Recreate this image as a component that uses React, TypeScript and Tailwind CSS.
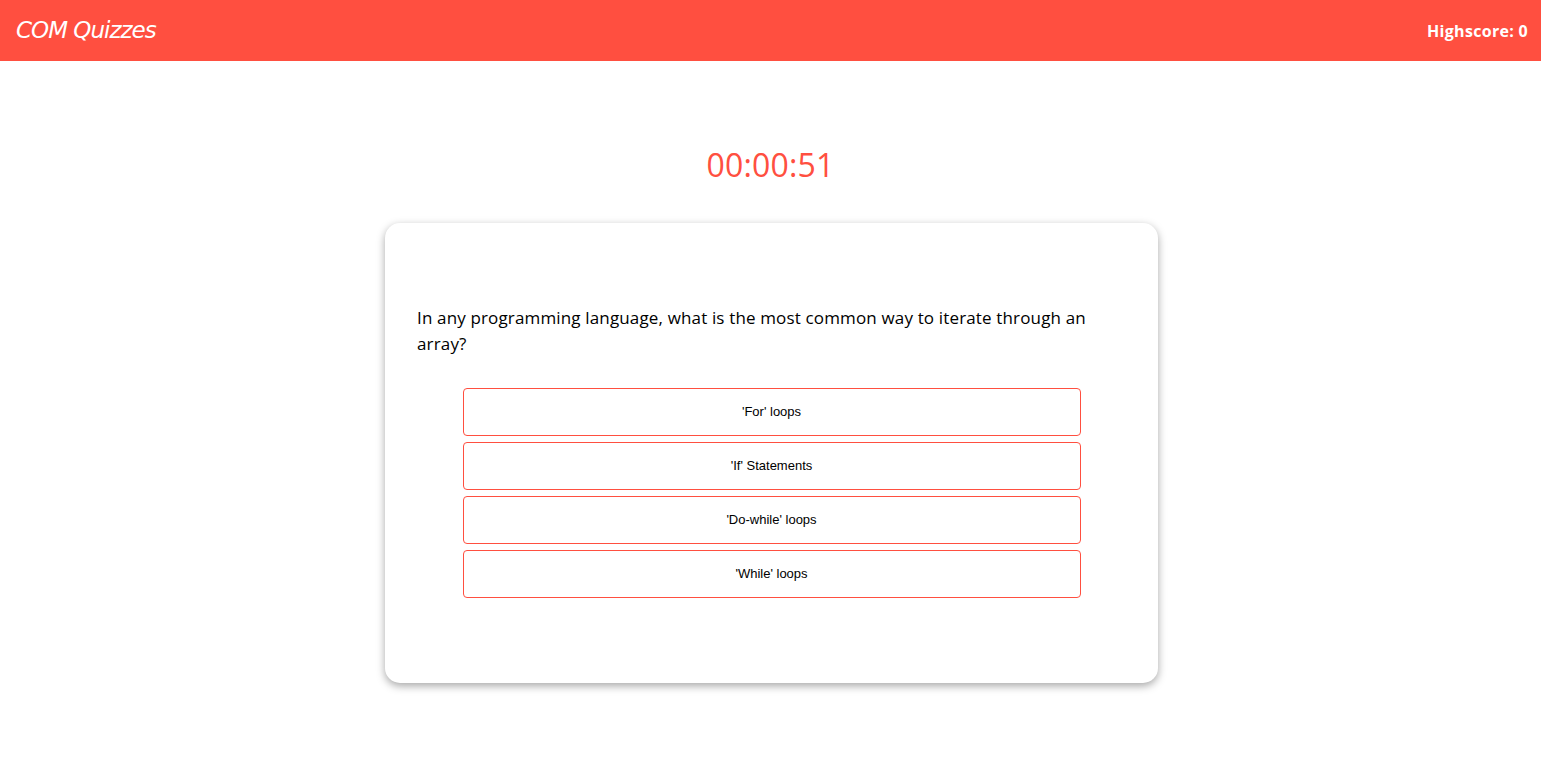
import React from "react";

const answers = ["'For' loops", "'If' Statements", "'Do-while' loops", "'While' loops"];

export default function App() {
  return (
    <div className="min-h-screen bg-white" style={{ fontFamily: "'Open Sans', 'Noto Sans', sans-serif" }}>
      <header className="h-[61px] bg-[#ff4f40] flex items-center justify-between pl-4 pr-[13px]">
        <h1 className="text-white italic text-[23px] tracking-[-1px]" style={{ fontFamily: "'DejaVu Sans', sans-serif" }}>
          COM Quizzes
        </h1>
        <div className="text-white font-bold text-[16px] tracking-[0.3px]">Highscore: 0</div>
      </header>
      <main className="flex flex-col items-center">
        <div className="mt-[78px] text-[#ff4f40] text-[32px] leading-[52px] tracking-[0.2px]">00:00:51</div>
        <div className="mt-[32px] ml-[2px] w-[773px] h-[460px] bg-white rounded-[15px] shadow-[0_3px_8px_rgba(0,0,0,0.35)] px-8 pt-[82px]">
          <p className="text-black text-[17px] leading-[26px] tracking-[0.15px]">
            In any programming language, what is the most common way to iterate through an array?
          </p>
          <div className="mt-[31px] flex flex-col items-center gap-[6px]">
            {answers.map((a) => (
              <button
                key={a}
                className="w-[618px] h-[48px] border border-[#ff4f40] rounded-[4px] bg-white text-black text-[13px]"
                style={{ fontFamily: "'Liberation Sans', Arial, sans-serif" }}
              >
                {a}
              </button>
            ))}
          </div>
        </div>
      </main>
    </div>
  );
}
